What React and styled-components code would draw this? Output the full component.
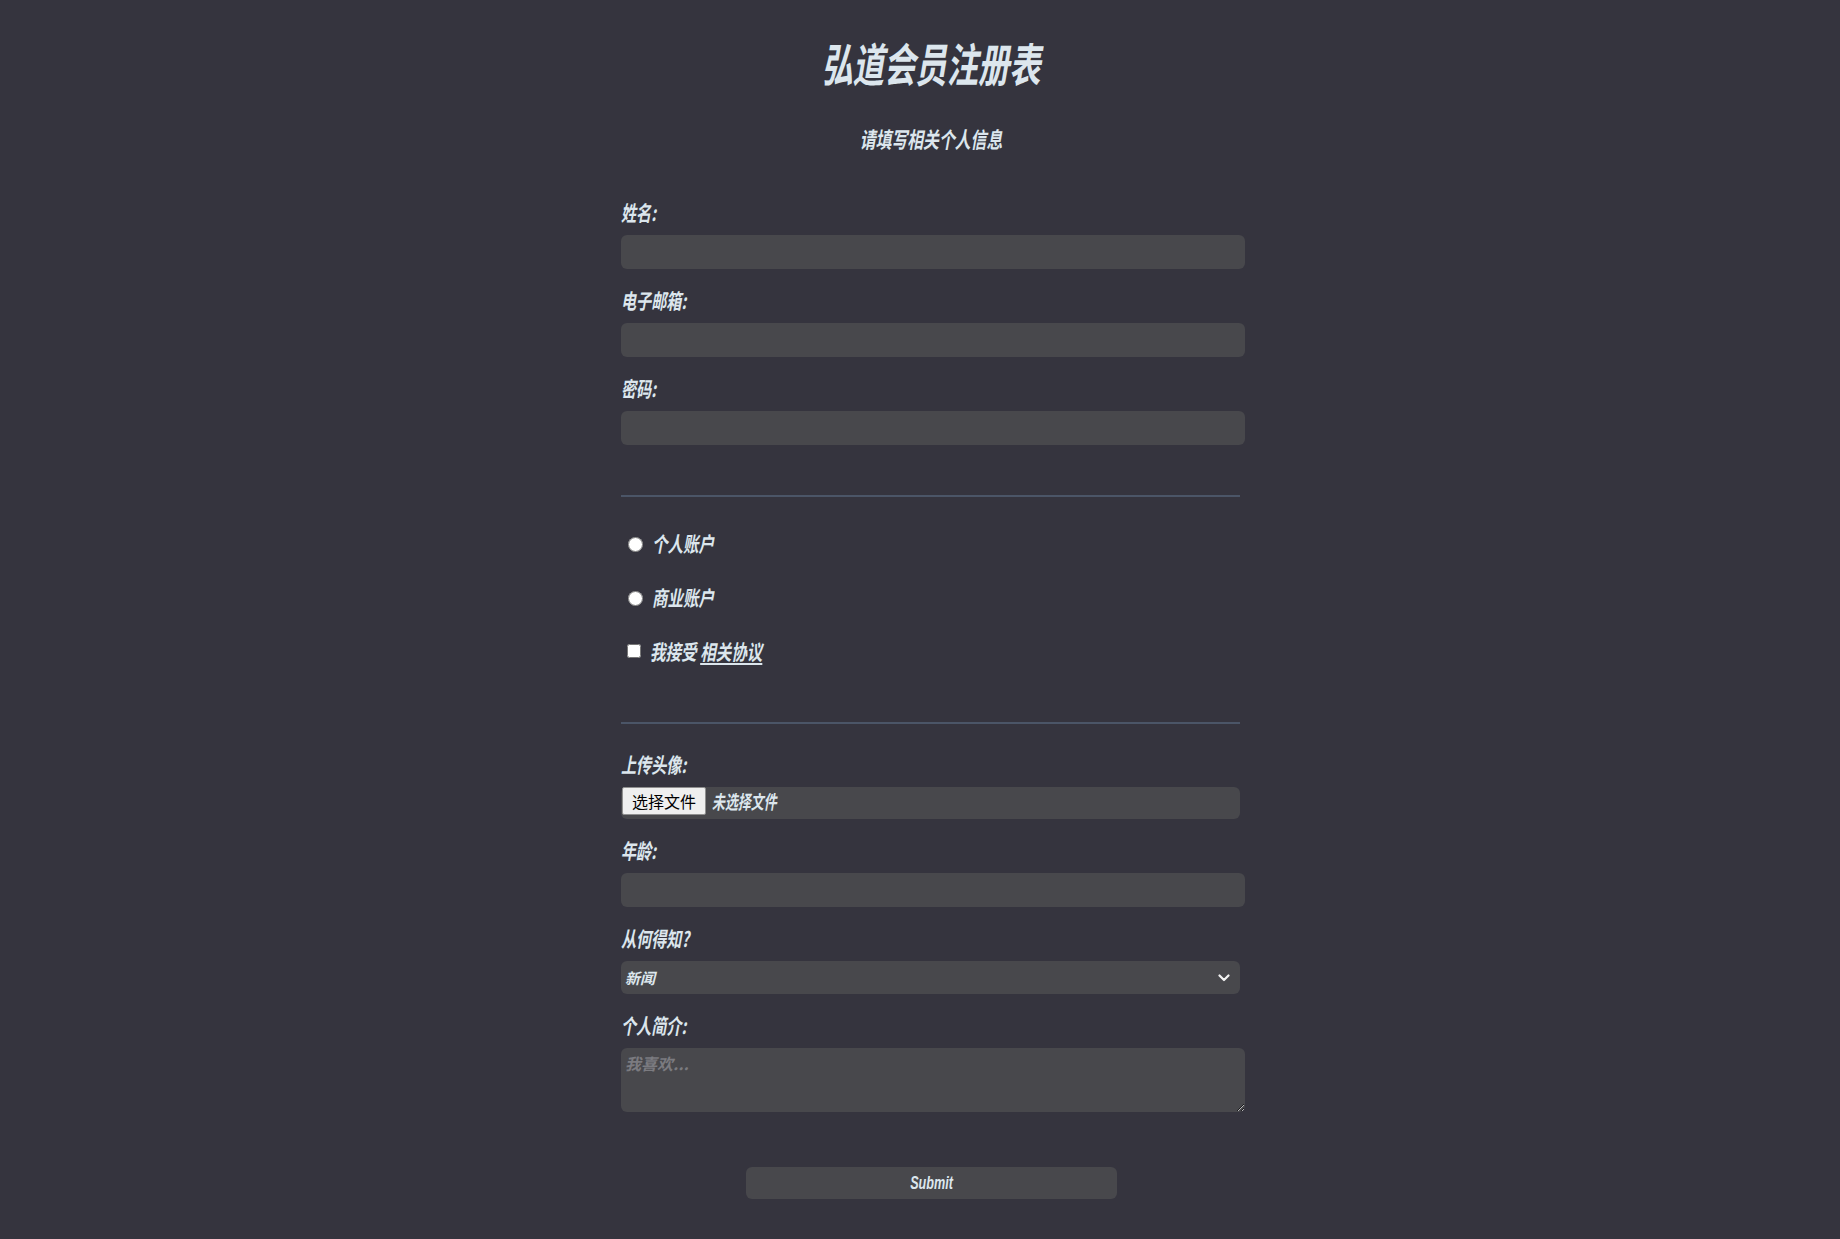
import React from 'react';
import styled, { createGlobalStyle } from 'styled-components';

const TEXT = '#dce6ed';
const FIELD = '#48484c';

const GlobalStyle = createGlobalStyle`
  html, body {
    margin: 0;
    background: #35343e;
  }
  body {
    font-family: "Noto Sans CJK SC", "Noto Sans", sans-serif;
    color: ${TEXT};
  }
  * { box-sizing: border-box; }
`;

function App() {
  return (
    <>
      <GlobalStyle />
      <Page>
        <Title>弘道会员注册表</Title>
        <Subtitle>请填写相关个人信息</Subtitle>

        <Form onSubmit={e => e.preventDefault()}>
          <Field>
            <Label htmlFor="name">姓名:</Label>
            <TextInput id="name" type="text" />
          </Field>
          <Field>
            <Label htmlFor="email">电子邮箱:</Label>
            <TextInput id="email" type="email" />
          </Field>
          <Field>
            <Label htmlFor="password">密码:</Label>
            <TextInput id="password" type="password" />
          </Field>

          <Divider $top={31} $bottom={34} />

          <Choices>
            <ChoiceRow>
              <Radio type="radio" name="account" value="personal" />
              <ChoiceText>个人账户</ChoiceText>
            </ChoiceRow>
            <ChoiceRow>
              <Radio type="radio" name="account" value="business" />
              <ChoiceText>商业账户</ChoiceText>
            </ChoiceRow>
            <ChoiceRow>
              <Check type="checkbox" />
              <ChoiceText>我接受 <TermsLink href="#">相关协议</TermsLink></ChoiceText>
            </ChoiceRow>
          </Choices>

          <Divider $top={59} $bottom={28} />

          <Field>
            <Label>上传头像:</Label>
            <FileBox>
              <HiddenFile type="file" />
              <FileButton>选择文件</FileButton>
              <FileStatus>未选择文件</FileStatus>
            </FileBox>
          </Field>
          <Field>
            <Label htmlFor="age">年龄:</Label>
            <TextInput id="age" type="number" />
          </Field>
          <Field>
            <Label htmlFor="source">从何得知?</Label>
            <SelectWrap>
              <Select id="source" defaultValue="news">
                <option value="news">新闻</option>
                <option value="search">搜索引擎</option>
                <option value="friend">朋友推荐</option>
                <option value="other">其他</option>
              </Select>
              <Chevron width="12" height="8" viewBox="0 0 12 8">
                <path d="M1.5 1.5 L6 6 L10.5 1.5" fill="none" stroke="#f2f2f2" strokeWidth="2.2" strokeLinecap="round" strokeLinejoin="round" />
              </Chevron>
            </SelectWrap>
          </Field>
          <Field>
            <Label htmlFor="bio">个人简介:</Label>
            <Bio id="bio" placeholder="我喜欢..." />
          </Field>

          <SubmitButton type="submit"><SubmitText>Submit</SubmitText></SubmitButton>
        </Form>
      </Page>
    </>
  );
}

export default App;

const Page = styled.main`
  min-height: 100vh;
  padding: 36px 0 40px 22px;
  display: flex;
  flex-direction: column;
  align-items: center;
`;

const Title = styled.h1`
  margin: 0;
  font-size: 46px;
  line-height: 52px;
  font-weight: 700;
  font-style: italic;
  color: ${TEXT};
  transform: scaleX(0.68);
  white-space: nowrap;
`;

const Subtitle = styled.p`
  margin: 36px 0 0;
  font-size: 22px;
  line-height: 28px;
  font-weight: 700;
  font-style: italic;
  transform: scaleX(0.72);
  white-space: nowrap;
`;

const Form = styled.form`
  width: 624px;
  margin: 48px 0 0 4px;
  display: flex;
  flex-direction: column;
`;

const Field = styled.div`
  display: flex;
  flex-direction: column;
  margin-bottom: 19px;
`;

const Label = styled.label`
  display: block;
  font-size: 21px;
  line-height: 24px;
  font-weight: 700;
  font-style: italic;
  margin-bottom: 11px;
  transform: scaleX(0.72);
  transform-origin: left center;
  white-space: nowrap;
`;

const TextInput = styled.input`
  width: 100%;
  height: 34px;
  border: none;
  border-radius: 6px;
  background: ${FIELD};
  color: ${TEXT};
  padding: 0 8px;
  font-size: 16px;
  outline: none;
  &::-webkit-inner-spin-button { display: none; }
`;

const Divider = styled.hr`
  width: 619px;
  margin: ${p => p.$top}px 0 ${p => p.$bottom}px;
  border: none;
  border-top: 2px solid #4b5567;
`;

const Choices = styled.div`
  display: flex;
  flex-direction: column;
  gap: 30px;
`;

const ChoiceRow = styled.label`
  display: flex;
  align-items: center;
  height: 24px;
`;

const Radio = styled.input`
  width: 15px;
  height: 15px;
  margin: 3px 9px 0 7px;
  flex-shrink: 0;
`;

const Check = styled.input`
  width: 14px;
  height: 14px;
  margin: 0 9px 0 6px;
  flex-shrink: 0;
`;

const ChoiceText = styled.span`
  display: inline-block;
  font-size: 21px;
  line-height: 24px;
  font-weight: 700;
  font-style: italic;
  transform: scaleX(0.74);
  transform-origin: left center;
  white-space: nowrap;
`;

const TermsLink = styled.a`
  color: ${TEXT};
  text-decoration: underline;
  text-underline-offset: 3px;
`;

const FileBox = styled.label`
  width: 619px;
  height: 32px;
  display: flex;
  align-items: flex-start;
  background: ${FIELD};
  border-radius: 6px;
  cursor: pointer;
`;

const HiddenFile = styled.input`
  display: none;
`;

const FileButton = styled.span`
  height: 28px;
  padding: 0 9px;
  margin-left: 1px;
  display: flex;
  align-items: center;
  background: #efefef;
  border: 1px solid #8f8f8f;
  border-radius: 2px;
  color: #000;
  font-size: 16px;
  font-weight: 400;
`;

const FileStatus = styled.span`
  display: inline-block;
  margin-left: 6px;
  font-size: 19px;
  line-height: 28px;
  font-weight: 700;
  font-style: italic;
  transform: scaleX(0.68);
  transform-origin: left center;
  white-space: nowrap;
`;

const SelectWrap = styled.div`
  position: relative;
  width: 619px;
`;

const Select = styled.select`
  width: 100%;
  height: 33px;
  appearance: none;
  border: none;
  border-radius: 6px;
  background: ${FIELD};
  color: ${TEXT};
  padding: 0 4px;
  font-family: "Noto Sans CJK SC", sans-serif;
  font-size: 15px;
  font-weight: 700;
  font-style: italic;
  outline: none;
`;

const Chevron = styled.svg`
  position: absolute;
  right: 10px;
  top: 13px;
  pointer-events: none;
`;

const Bio = styled.textarea`
  width: 100%;
  height: 64px;
  border: none;
  border-radius: 6px;
  background: ${FIELD};
  color: ${TEXT};
  padding: 3px 4px;
  font-family: "Noto Sans CJK SC", sans-serif;
  font-size: 16px;
  font-weight: 700;
  font-style: italic;
  outline: none;
  &::placeholder {
    color: #7b7b80;
  }
`;

const SubmitButton = styled.button`
  align-self: center;
  width: 371px;
  height: 32px;
  margin: 36px 4px 0 0;
  border: none;
  border-radius: 6px;
  background: ${FIELD};
  color: ${TEXT};
  cursor: pointer;
  display: flex;
  align-items: center;
  justify-content: center;
`;

const SubmitText = styled.span`
  display: inline-block;
  font-family: "Liberation Sans", Arial, sans-serif;
  font-size: 18px;
  font-weight: 700;
  font-style: italic;
  transform: scaleX(0.7);
`;
